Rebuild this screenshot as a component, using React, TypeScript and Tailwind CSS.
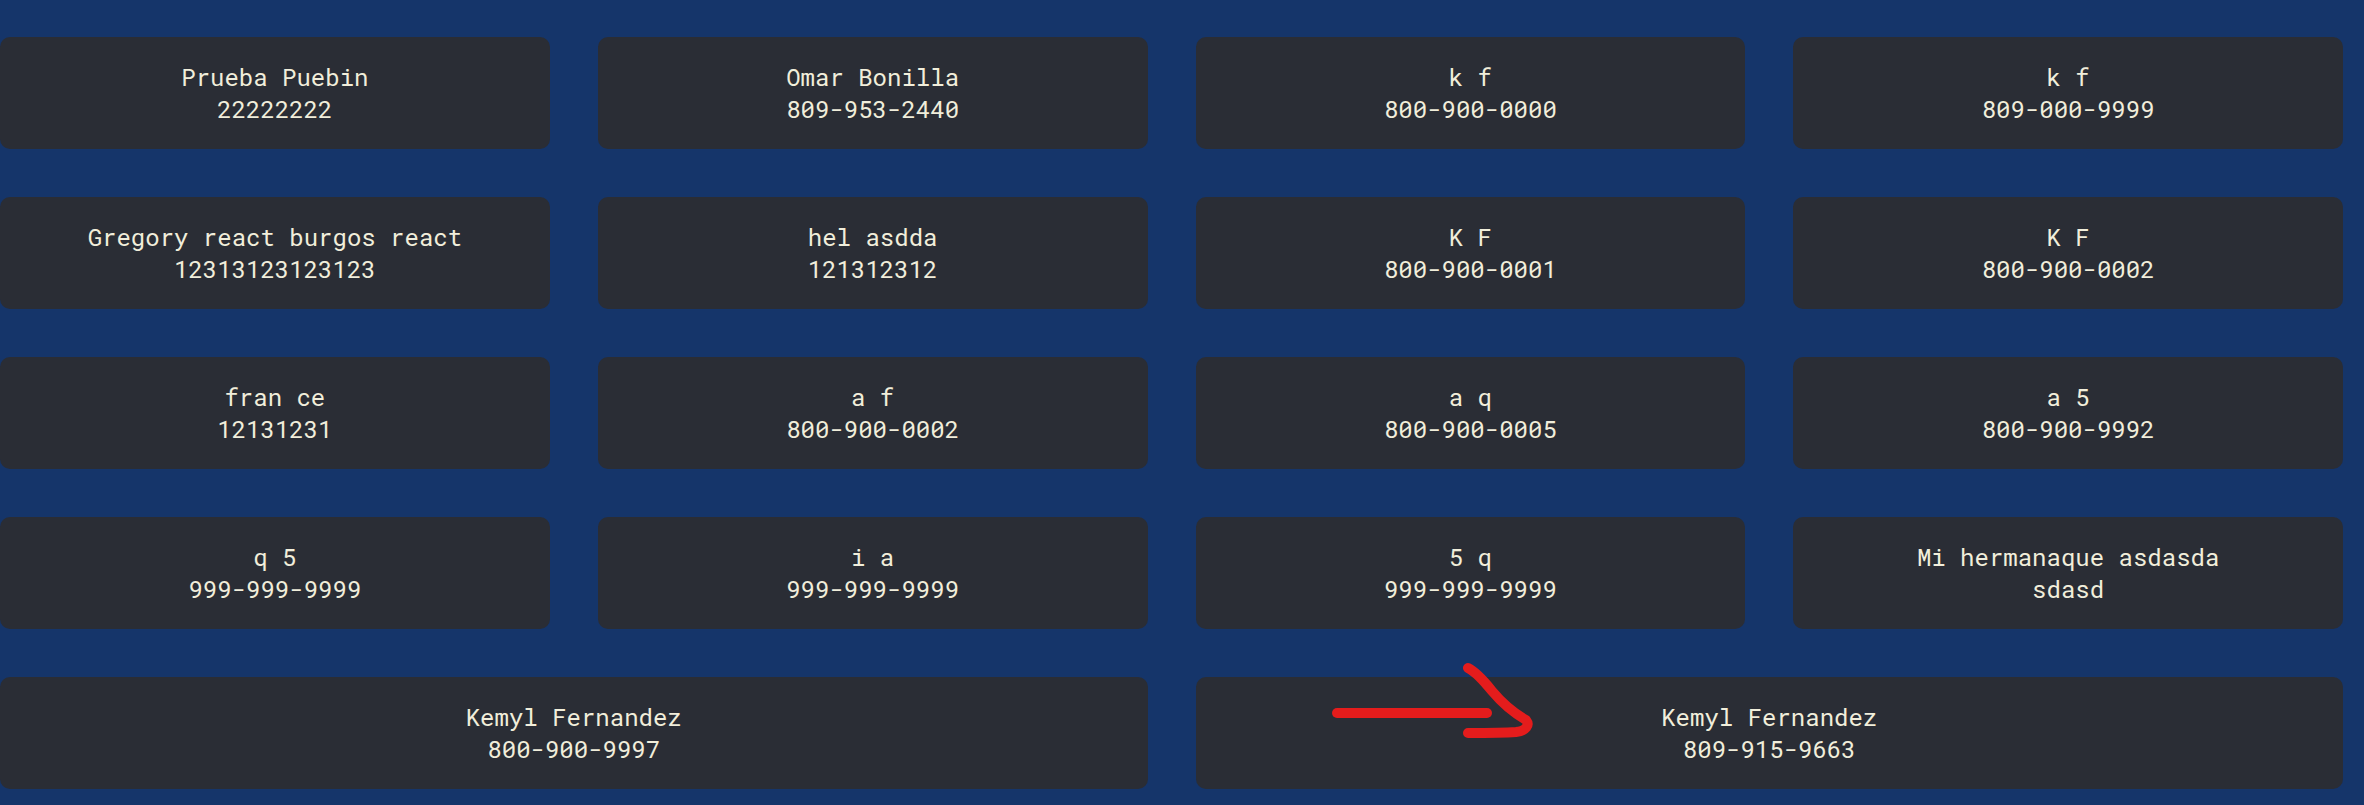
import React from 'react'

type Contact = { name: string; phone: string; wide?: boolean; marked?: boolean }

const contacts: Contact[] = [
  { name: 'Prueba Puebin', phone: '22222222' },
  { name: 'Omar Bonilla', phone: '809-953-2440' },
  { name: 'k f', phone: '800-900-0000' },
  { name: 'k f', phone: '809-000-9999' },
  { name: 'Gregory react burgos react', phone: '12313123123123' },
  { name: 'hel asdda', phone: '121312312' },
  { name: 'K F', phone: '800-900-0001' },
  { name: 'K F', phone: '800-900-0002' },
  { name: 'fran ce', phone: '12131231' },
  { name: 'a f', phone: '800-900-0002' },
  { name: 'a q', phone: '800-900-0005' },
  { name: 'a 5', phone: '800-900-9992' },
  { name: 'q 5', phone: '999-999-9999' },
  { name: 'i a', phone: '999-999-9999' },
  { name: '5 q', phone: '999-999-9999' },
  { name: 'Mi hermanaque asdasda', phone: 'sdasd' },
  { name: 'Kemyl Fernandez', phone: '800-900-9997', wide: true },
  { name: 'Kemyl Fernandez', phone: '809-915-9663', wide: true, marked: true },
]

function RedArrow() {
  return (
    <svg
      className="absolute left-[130px] top-[-20px] overflow-visible pointer-events-none"
      width="220"
      height="90"
      viewBox="0 0 220 90"
      fill="none"
    >
      <path d="M11 56 L161 56" stroke="#e41c1c" strokeWidth="10" strokeLinecap="round" />
      <path
        d="M142 11 C150 15 158 24 166 34 C176 46 188 56 200 63 C204 68 200 74 190 75 C176 76 164 76 142 76"
        stroke="#e41c1c"
        strokeWidth="10"
        strokeLinecap="round"
        strokeLinejoin="round"
      />
    </svg>
  )
}

function ContactCard({ contact }: { contact: Contact }) {
  return (
    <div
      className={`relative h-[112px] rounded-[10px] bg-[#2a2d35] flex flex-col items-center justify-center text-center text-[24px] leading-8 text-[#f1eedb] ${
        contact.wide ? 'col-span-2' : ''
      }`}
    >
      {contact.marked && <RedArrow />}
      <span>{contact.name}</span>
      <span>{contact.phone}</span>
    </div>
  )
}

export default function App() {
  return (
    <div
      className="w-[2364px] h-[805px] bg-[#15356a] pt-[37px] pr-[21px] pb-[16px] overflow-hidden"
      style={{ fontFamily: '"Roboto Mono", "DejaVu Sans Mono", "Liberation Mono", monospace' }}
    >
      <div className="grid grid-cols-4 gap-12">
        {contacts.map((c, i) => (
          <ContactCard key={i} contact={c} />
        ))}
      </div>
    </div>
  )
}
